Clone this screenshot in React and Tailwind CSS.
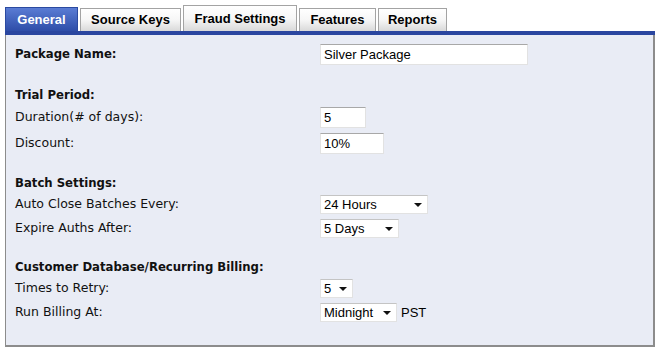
import React from 'react'

const tabs = [
  { label: 'General', w: 'w-[73px]', h: 'h-[24px]', active: true },
  { label: 'Source Keys', w: 'w-[101px]', h: 'h-[23px]' },
  { label: 'Fraud Settings', w: 'w-[114px]', h: 'h-[26px]' },
  { label: 'Features', w: 'w-[77px]', h: 'h-[23px]' },
  { label: 'Reports', w: 'w-[69px]', h: 'h-[23px]' },
]

function TextBox({ value, w, h = 'h-[21px]' }) {
  return (
    <div className={`${w} ${h} flex items-center bg-white border border-[#e2e2e2] border-t-[#a8a8a8] px-[3px] text-[13px] text-black font-['Liberation_Sans',Arial,sans-serif]`}>
      {value}
    </div>
  )
}

function Select({ value, w }) {
  return (
    <div className={`${w} h-[19px] flex items-center justify-between bg-white border border-[#e2e2e2] border-t-[#c4c4c4] pl-[3px] pr-[5px] text-[13px] text-black font-['Liberation_Sans',Arial,sans-serif]`}>
      <span>{value}</span>
      <svg width="8" height="4" viewBox="0 0 8 4"><path d="M0 0h8L4 4z" fill="#111" /></svg>
    </div>
  )
}

function Row({ label, className = '', h = 'h-[21px]', children }) {
  return (
    <div className={`flex items-center ${h} ${className}`}>
      <div className="w-[305px] shrink-0">{label}</div>
      <div className="flex items-center gap-[4px]">{children}</div>
    </div>
  )
}

function Heading({ children, className = '' }) {
  return <div className={`h-[16px] flex items-center font-bold text-[11.7px] ${className}`}>{children}</div>
}

export default function App() {
  return (
    <div className="w-[660px] h-[351px] bg-white pl-[5px] pr-[5px] pt-[5px] font-['DejaVu_Sans',Verdana,sans-serif] text-[12.5px] text-[#111]">
      <div className="flex items-end gap-[2px] h-[26px]">
        {tabs.map(t => (
          <div
            key={t.label}
            className={
              t.active
                ? `${t.w} ${t.h} flex items-center justify-center border border-[#2b4aa0] border-b-0 bg-gradient-to-b from-[#5a7cd4] to-[#2e4da8] text-white text-[13px] font-bold font-['Liberation_Sans',Arial,sans-serif]`
                : `${t.w} ${t.h} flex items-center justify-center border border-[#a3a3a3] border-b-0 bg-gradient-to-b from-white via-[#f6f6f6] to-[#d9d9d9] text-black text-[13px] font-bold font-['Liberation_Sans',Arial,sans-serif]`
            }
          >
            {t.label}
          </div>
        ))}
      </div>
      <div className="h-[4px] bg-[#2a46a0]" />
      <div className="bg-[#e9ecf5] border-l border-r-2 border-b-2 border-[#8c8c8c] pl-[9px] pt-[9px] pb-[23px]">
        <Row label={<span className="font-bold text-[11.7px]">Package Name:</span>}>
          <TextBox value="Silver Package" w="w-[208px]" />
        </Row>

        <Heading className="mt-[23px]">Trial Period:</Heading>
        <Row label="Duration(# of days):" className="mt-[3px]">
          <TextBox value="5" w="w-[46px]" />
        </Row>
        <Row label="Discount:" className="mt-[5px]">
          <TextBox value="10%" w="w-[64px]" />
        </Row>

        <Heading className="mt-[22px]">Batch Settings:</Heading>
        <Row label="Auto Close Batches Every:" className="mt-[3px]" h="h-[19px]">
          <Select value="24 Hours" w="w-[108px]" />
        </Row>
        <Row label="Expire Auths After:" className="mt-[5px]" h="h-[19px]">
          <Select value="5 Days" w="w-[79px]" />
        </Row>

        <Heading className="mt-[22px]">Customer Database/Recurring Billing:</Heading>
        <Row label="Times to Retry:" className="mt-[3px]" h="h-[19px]">
          <Select value="5" w="w-[33px]" />
        </Row>
        <Row label="Run Billing At:" className="mt-[5px]" h="h-[19px]">
          <Select value="Midnight" w="w-[77px]" />
          <span className="text-[13px] text-black font-['Liberation_Sans',Arial,sans-serif]">PST</span>
        </Row>
      </div>
    </div>
  )
}
